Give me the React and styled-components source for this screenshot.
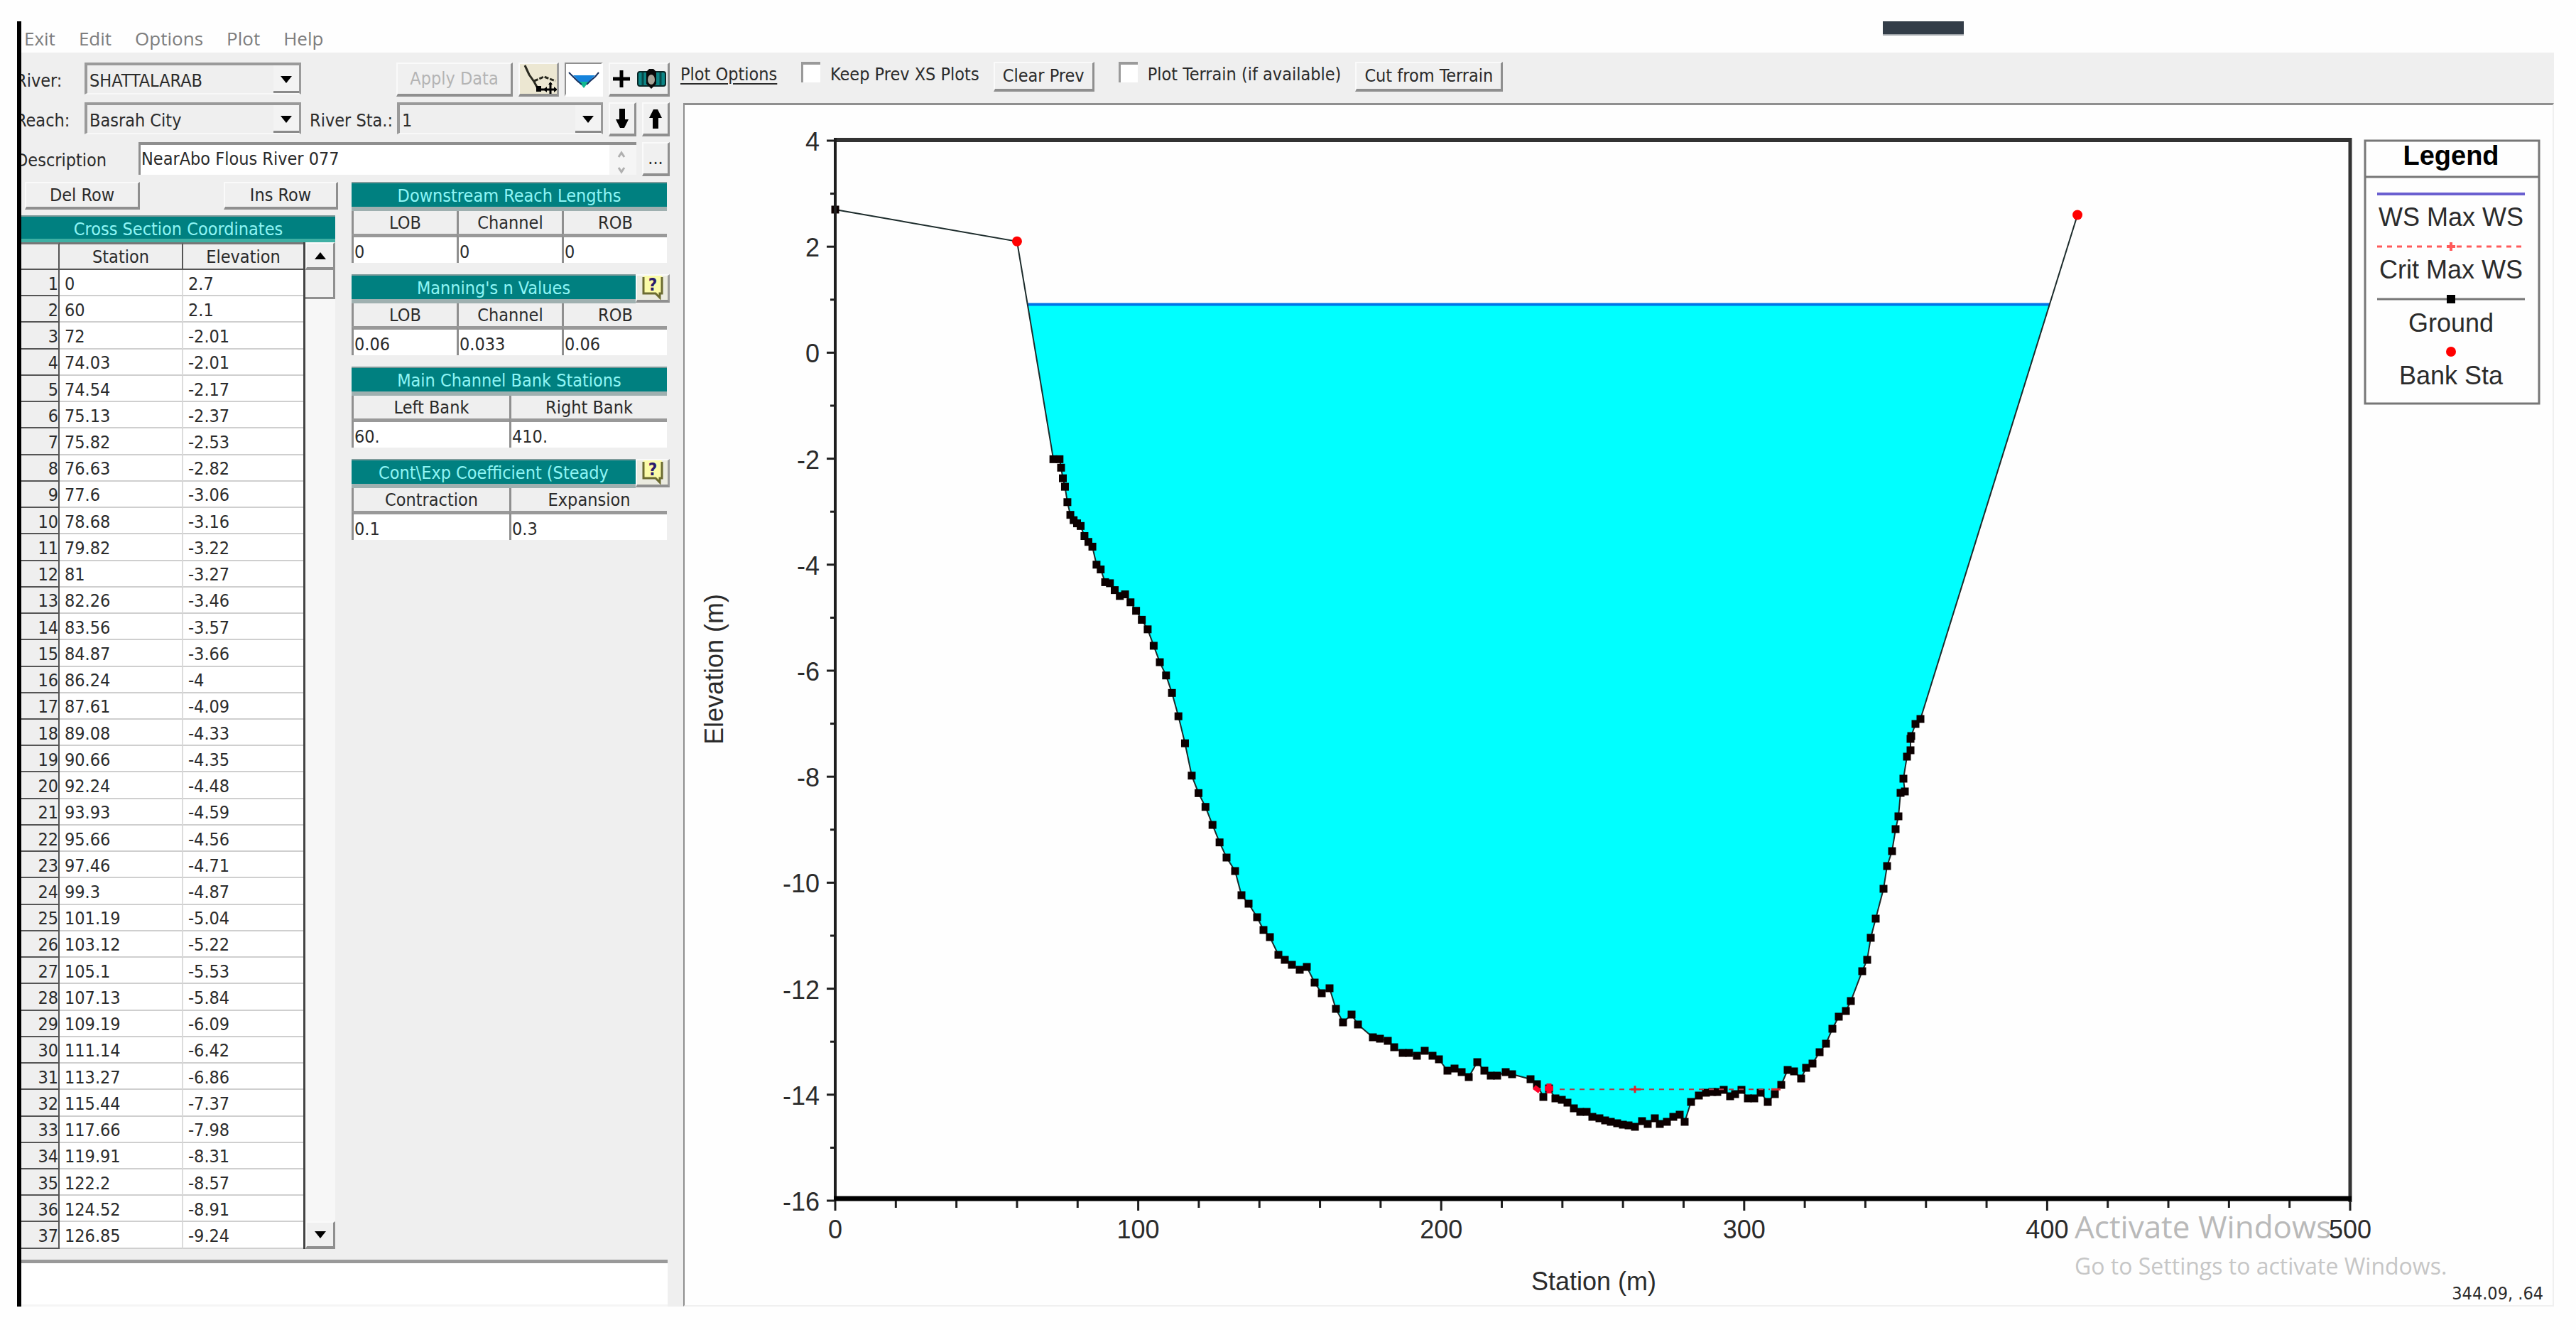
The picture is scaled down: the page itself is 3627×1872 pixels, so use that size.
import React, { useState } from 'react'
import styled, { createGlobalStyle } from 'styled-components'

const GlobalStyle = createGlobalStyle`
  *{
    box-sizing: border-box;
  }
  body{
    margin: 0;
    background: #fefefe;
    color: #2b2b2b;
    font: 25px/30px 'DejaVu Sans Condensed', 'DejaVu Sans', sans-serif;
  }
  button, input, select{
    font: inherit;
    color: inherit;
  }
`

const Page = styled.div`
  height: 100vh;
  min-height: 1300px;
  padding: 30px 31px 33px 24px;
`
const Window = styled.div`
  height: 100%;
  display: flex;
  flex-direction: column;
  border-left: 6px solid #000;
  background: #efefef;
  overflow: hidden;
`
const MenuBar = styled.nav`
  height: 44px;
  display: flex;
  align-items: center;
  gap: 33px;
  padding-left: 4px;
  background: #fefefe;
`
const MenuItem = styled.button`
  padding: 0;
  margin-top: 4px;
  border: 0;
  background: none;
  color: #7d7d7d;
  font: 26px/32px 'Open Sans', 'Noto Sans', sans-serif;
`
const DragHandle = styled.div`
  align-self: flex-start;
  width: 114px;
  height: 20px;
  margin-left: auto;
  margin-right: 831px;
  background: #333d48;
  border-bottom: 2px solid #9ea3a8;
`
const Main = styled.main`
  flex: 1;
  min-height: 0;
  display: grid;
  grid-template-columns: minmax(932px, 26%) 1fr;
  grid-template-rows: 100%;
`
const Side = styled.section`
  min-height: 0;
  display: flex;
  flex-direction: column;
  padding-top: 14px;
`
const Row = styled.div`
  display: flex;
  gap: 8px;
  height: 48px;
  margin: 0 19px 8px -8px;
`
const Label = styled.label`
  width: ${props => props.$width};
  flex: ${props => props.$width ? 'none' : '1'};
  padding-left: ${props => props.$width ? '0' : '4px'};
  margin-right: -8px;
  line-height: 52px;
  white-space: nowrap;
`
const SelectBox = styled.div`
  width: ${props => props.$width};
  height: 45px;
  display: grid;
  grid-template-columns: 1fr 36px;
  margin-right: ${props => props.$push ? 'auto' : '0'};
  border: solid #9a9a9a;
  border-width: 4px 3px 2px 4px;
  border-bottom-color: #f8f8f8;
  select{
    grid-area: 1 / 1 / 2 / 3;
    width: 100%;
    height: 100%;
    padding: 4px 42px 0 3px;
    border: 0;
    appearance: none;
    background: #efefef;
  }
  span{
    grid-area: 1 / 2 / 2 / 3;
    display: grid;
    place-items: center;
    padding-top: 4px;
    border-bottom: 3px solid #8a8a8a;
    background: #f3f3f3;
    pointer-events: none;
  }
`
const Button = styled.button`
  width: ${props => props.$width || 'auto'};
  height: ${props => props.$height || '48px'};
  display: flex;
  align-items: center;
  justify-content: center;
  gap: 4px;
  padding: 0;
  border: solid #fafafa;
  border-width: 2px 3px 4px 2px;
  border-right-color: #8f8f8f;
  border-bottom-color: #8f8f8f;
  background: ${props => props.$bg || '#f0f0f0'};
  white-space: nowrap;
  &:disabled{
    color: #b4b4b4;
  }
`
const IconButton = styled(Button)`
  border-color: ${props => props.$pressed ? '#8f8f8f #fff #fff #8f8f8f' : '#fafafa #9c9c9c #8f8f8f #fafafa'};
`
const Description = styled.div`
  flex: 1;
  height: 46px;
  display: flex;
  border: solid #8f8f8f;
  border-width: 4px 0 0 3px;
  background: #fff;
  input{
    flex: 1;
    padding: 0 0 2px 1px;
    border: 0;
    background: none;
  }
  svg{
    width: 38px;
    background: #f5f5f5;
  }
`
const Body = styled.div`
  flex: 1;
  min-height: 0;
  display: grid;
  grid-template-columns: 442px 448px;
  justify-content: space-between;
  margin-right: 19px;
`
const Coordinates = styled.div`
  min-height: 0;
  display: flex;
  flex-direction: column;
`
const RowButtons = styled.div`
  display: flex;
  justify-content: space-between;
  padding: 0 0 8px 5px;
  margin-right: -4px;
`
const Title = styled.h2`
  flex: 1;
  height: ${props => props.$tall ? '38px' : '41px'};
  margin: 0;
  padding-top: 4px;
  border-top: 2px solid #7d9a9a;
  border-bottom: ${props => props.$tall ? '5px solid #3fb0a4' : '6px solid #9fb0b0'};
  background: #008080;
  color: #8ff5f5;
  font-size: 25px;
  line-height: 28px;
  font-weight: normal;
  text-align: center;
  white-space: nowrap;
`
const GridBox = styled.div`
  flex: 1;
  min-height: 0;
  display: grid;
  grid-template-columns: 1fr 42px;
`
const CoordTable = styled.table`
  width: 100%;
  height: 100%;
  border-spacing: 0;
  table-layout: fixed;
  background: #fff;
  border-right: 3px solid #444;
  line-height: 28px;
  th, td{
    padding: 4px 0 0;
    text-align: left;
    font-weight: normal;
    border-right: 2px solid #dcdcdc;
    border-bottom: 2px solid #cfcfcf;
  }
  td{
    padding-left: 7px;
  }
  th{
    background: #efefef;
    border-color: #555;
  }
  thead th{
    height: 39px;
    padding-top: 2px;
    border-top: 3px solid #777;
    text-align: center;
  }
  tbody th{
    text-align: right;
  }
  th:last-child, td:last-child{
    border-right: 0;
  }
`
const IndexCol = styled.col`
  width: 54px;
`
const StationCol = styled.col`
  width: 174px;
`
const ScrollBar = styled.div`
  display: flex;
  flex-direction: column;
  background: #f7f7f7;
  button:last-child{
    margin-top: auto;
  }
`
const Thumb = styled.div`
  height: 41px;
  border: solid #8f8f8f;
  border-width: 0 3px 3px 0;
  background: #f0f0f0;
`
const Panels = styled.div`
  display: flex;
  flex-direction: column;
  gap: 16px;
`
const PanelHead = styled.div`
  display: flex;
  margin-right: ${props => props.$help ? '0' : '4px'};
`
const ValueTable = styled.table`
  width: 444px;
  border-spacing: 0;
  table-layout: fixed;
  th{
    height: 32px;
    padding: 2px 0 0;
    border-left: 3px solid #8f8f8f;
    font-weight: normal;
    line-height: 30px;
  }
  td{
    height: 41px;
    padding: 0;
    border-left: 3px solid #8f8f8f;
    border-top: 5px solid #999;
    background: #fff;
  }
  input{
    display: block;
    width: 100%;
    height: 36px;
    padding: 4px 0 0 1px;
    border: 0;
    background: none;
  }
`
const Messages = styled.output`
  height: 66px;
  margin: 15px 22px 0 0;
  border-top: 5px solid #999;
  border-bottom: 3px solid #f5f5f5;
  background: #fff;
`
const PlotArea = styled.section`
  min-width: 0;
  min-height: 0;
  display: flex;
  flex-direction: column;
`
const PlotBar = styled.div`
  display: flex;
  align-items: flex-start;
  height: 71px;
  padding-top: 13px;
  margin-left: -4px;
  span{
    width: 170px;
    line-height: 36px;
    text-decoration: underline;
    text-underline-offset: 4px;
  }
`
const Check = styled.label`
  display: flex;
  gap: 14px;
  margin-right: 20px;
  line-height: 36px;
  white-space: nowrap;
  button + &{
    margin-left: 34px;
  }
  input{
    appearance: none;
    width: 27px;
    height: 29px;
    margin: 0;
    border: solid #9a9a9a;
    border-width: 4px 0 0 3px;
    background: #fff;
  }
`
const Plot = styled.svg`
  flex: 1;
  min-height: 0;
  width: 100%;
  border: solid #8f8f8f;
  border-width: 3px 2px 2px 2px;
  border-right-color: #f0f0f0;
  border-bottom-color: #f0f0f0;
  background: #fefefe;
  font-family: 'Liberation Sans', Arial, sans-serif;
  font-size: 36px;
`

const coords = [
  [0, 2.7], [60, 2.1], [72, -2.01], [74.03, -2.01], [74.54, -2.17], [75.13, -2.37],
  [75.82, -2.53], [76.63, -2.82], [77.6, -3.06], [78.68, -3.16], [79.82, -3.22],
  [81, -3.27], [82.26, -3.46], [83.56, -3.57], [84.87, -3.66], [86.24, -4],
  [87.61, -4.09], [89.08, -4.33], [90.66, -4.35], [92.24, -4.48], [93.93, -4.59],
  [95.66, -4.56], [97.46, -4.71], [99.3, -4.87], [101.19, -5.04], [103.12, -5.22],
  [105.1, -5.53], [107.13, -5.84], [109.19, -6.09], [111.14, -6.42], [113.27, -6.86],
  [115.44, -7.37], [117.66, -7.98], [119.91, -8.31], [122.2, -8.57], [124.52, -8.91],
  [126.85, -9.24],
]

// rest of the bed, already in plot units
const bed = [
  [763, 1059], [775, 1078], [784, 1112], [794, 1124], [806, 1143], [815, 1161], [824, 1171],
  [836, 1196], [845, 1203], [855, 1210], [866, 1217], [876, 1213], [887, 1235], [897, 1250],
  [908, 1243], [917, 1272], [927, 1291], [939, 1280], [948, 1294], [969, 1312], [979, 1314],
  [990, 1317], [999, 1326], [1011, 1334], [1020, 1334], [1031, 1338], [1042, 1331],
  [1053, 1338], [1062, 1343], [1074, 1359], [1084, 1356], [1094, 1361], [1104, 1368],
  [1116, 1347], [1126, 1359], [1135, 1366], [1144, 1366], [1156, 1361], [1165, 1364],
  [1191, 1371], [1200, 1378], [1209, 1396], [1217, 1384], [1226, 1398], [1235, 1400],
  [1243, 1404], [1252, 1412], [1261, 1417], [1270, 1417], [1278, 1424], [1288, 1426],
  [1296, 1429], [1304, 1431], [1313, 1433], [1321, 1435], [1329, 1436], [1338, 1438],
  [1348, 1430], [1356, 1434], [1366, 1426], [1373, 1434], [1383, 1431], [1392, 1424],
  [1401, 1421], [1408, 1431], [1417, 1403], [1428, 1394], [1438, 1390], [1447, 1389],
  [1454, 1389], [1463, 1386], [1472, 1395], [1479, 1392], [1488, 1386], [1497, 1398],
  [1506, 1398], [1515, 1390], [1525, 1403], [1535, 1392], [1544, 1379], [1553, 1358],
  [1562, 1360], [1572, 1370], [1579, 1355], [1588, 1349], [1598, 1333], [1607, 1321],
  [1616, 1300], [1625, 1283], [1635, 1275], [1642, 1261], [1658, 1219], [1665, 1203],
  [1670, 1172], [1677, 1145], [1688, 1103], [1693, 1071], [1700, 1050], [1705, 1019],
  [1709, 1001], [1712, 968], [1718, 966], [1716, 948], [1721, 917], [1726, 908],
  [1726, 892], [1727, 888], [1733, 871], [1740, 864],
]

const X = station => 212 + station * 4.266
const Y = elevation => 50 + (4 - elevation) * 74.6

function Arrow({ up }){
  return <svg width="16" height="10"><path d={up ? 'M0 10L8 0L16 10Z' : 'M0 0H16L8 10Z'} fill="#000"/></svg>
}

function Combo({ id, value, width, push }){
  return(
    <SelectBox $width={width} $push={push}>
      <select id={id} defaultValue={value}>
        <option>{value}</option>
      </select>
      <span><Arrow/></span>
    </SelectBox>
  )
}

function ValuePanel({ title, heads, values, help }){
  return(
    <div>
      <PanelHead $help={help}>
        <Title>{title}</Title>
        {help && (
          <IconButton $width="48px" $height="40px" $bg="#ebebe0" aria-label="Help">
            <svg width="36" height="34" viewBox="0 0 36 34">
              <path d="M5 0V25H22L28 31V25H31V0Z" fill="#fbfba8"/>
              <path d="M5 2V25H22L28 31V25H31V2" fill="none" stroke="#6b6b30" strokeWidth="3"/>
              <text x="18" y="21" textAnchor="middle" fontSize="24" fontWeight="bold" fill="#2c1c6c">?</text>
            </svg>
          </IconButton>
        )}
      </PanelHead>
      <ValueTable>
        <thead>
          <tr>{heads.map(head => <th key={head}>{head}</th>)}</tr>
        </thead>
        <tbody>
          <tr>
            {values.map((value, i) => (
              <td key={heads[i]}><input aria-label={heads[i]} defaultValue={value}/></td>
            ))}
          </tr>
        </tbody>
      </ValueTable>
    </div>
  )
}

function CrossSectionPlot(){
  const tablePoints = coords.map(([s, e]) => [X(s), Y(e)])
  const ground = [...tablePoints, ...bed, [X(410), Y(2.6)]]
  const ws = Y(0.91)
  const water = [[X(63.6), ws], ...tablePoints.slice(2), ...bed, [X(400.8), ws]]
  const crit = Y(-13.9)
  const xTicks = Array.from({ length: 26 }, (_, i) => i * 20)
  const yTicks = Array.from({ length: 21 }, (_, i) => 4 - i)

  return(
    <Plot viewBox="0 0 2630 1689" preserveAspectRatio="none" fill="#2b2b2b">
      <polygon points={water.join(' ')} fill="#00ffff"/>
      <line x1={X(63.6)} x2={X(400.8)} y1={ws} y2={ws} stroke="#0074e8" strokeWidth="4"/>
      <polyline points={ground.join(' ')} fill="none" stroke="#1c2b2b" strokeWidth="2"/>
      {[tablePoints[0], ...tablePoints.slice(2), ...bed].map(([x, y], i) => (
        <rect key={i} x={x - 5.5} y={y - 5.5} width="11" height="11" fill="#0c0000"/>
      ))}
      <line x1="1232" x2="1528" y1={crit} y2={crit} stroke="#b03a48" strokeWidth="2" strokeDasharray="7 7"/>
      <path d={`M1332 ${crit}H1346M1338 ${crit - 5}V${crit + 5}M1530 ${crit}H1543`} stroke="#e0242c" strokeWidth="3"/>
      <path d="M1196 1382L1204 1388M1217 1377V1391M1211 1384H1223" stroke="#ff0028" strokeWidth="7"/>
      <circle cx={X(60)} cy={Y(2.1)} r="7" fill="#ff0000"/>
      <circle cx={X(410)} cy={Y(2.6)} r="7" fill="#ff0000"/>

      <g stroke="#1e1e1e" fill="none">
        <path d="M211 49H2345" strokeWidth="6" stroke="#333"/>
        <path d="M2345 46V1544" strokeWidth="5" stroke="#333"/>
        <path d="M212 46V1542" strokeWidth="4"/>
        <path d="M210 1539H2347" strokeWidth="7" stroke="#000"/>
        {xTicks.map(s => <path key={s} d={`M${X(s)} 1542v${s % 100 ? 10 : 14}`} strokeWidth="3"/>)}
        {yTicks.map(e => <path key={e} d={`M211 ${Y(e)}h${e % 2 ? -6 : -11}`} strokeWidth="3"/>)}
      </g>

      <g fill="#b9b9b9" fontFamily="'Open Sans', 'Noto Sans', sans-serif">
        <text x="1957" y="1595" fontSize="44">Activate Windows</text>
        <text x="1957" y="1646" fontSize="32" fill="#c6c6c6">Go to Settings to activate Windows.</text>
      </g>
      {xTicks.filter(s => s % 100 === 0).map(s => (
        <text key={s} x={X(s)} y="1595" textAnchor="middle">{s}</text>
      ))}
      {yTicks.filter(e => e % 2 === 0).map(e => (
        <text key={e} x="190" y={Y(e) + 14} textAnchor="end">{e}</text>
      ))}
      <text x="1280" y="1668" textAnchor="middle">Station (m)</text>
      <text transform="translate(54 794) rotate(-90)" textAnchor="middle">Elevation (m)</text>
      <text x="2617" y="1681" textAnchor="end" fontSize="25" fontFamily="'DejaVu Sans Condensed', sans-serif">344.09, .64</text>

      <g textAnchor="middle">
        <rect x="2366" y="50" width="245" height="370" fill="#fefefe" stroke="#777" strokeWidth="3"/>
        <path d="M2366 101H2611M2383 273H2591" stroke="#777" strokeWidth="3"/>
        <text x="2487" y="84" fontSize="38" fontWeight="bold" fill="#000">Legend</text>
        <path d="M2383 125H2591" stroke="#6a5fd0" strokeWidth="4"/>
        <text x="2487" y="170">WS Max WS</text>
        <path d="M2383 199H2591" stroke="#ff5a5a" strokeWidth="3" strokeDasharray="7 7"/>
        <path d="M2487 193V205M2481 199H2493" stroke="#ff5a5a" strokeWidth="4"/>
        <text x="2487" y="244">Crit Max WS</text>
        <rect x="2481" y="267" width="12" height="12" fill="#000"/>
        <text x="2487" y="319">Ground</text>
        <circle cx="2487" cy="347" r="7" fill="#ff0000"/>
        <text x="2487" y="393">Bank Sta</text>
      </g>
    </Plot>
  )
}

export default function App(){
  const [description, setDescription] = useState('NearAbo Flous River 077')

  return(
    <Page>
      <GlobalStyle/>
      <Window>
        <MenuBar>
          {['Exit', 'Edit', 'Options', 'Plot', 'Help'].map(item => <MenuItem key={item}>{item}</MenuItem>)}
          <DragHandle/>
        </MenuBar>
        <Main>
          <Side>
            <Row>
              <Label htmlFor="river" $width="97px">River:</Label>
              <Combo id="river" value="SHATTALARAB" width="305px" push/>
              <Button $width="164px" disabled>Apply Data</Button>
              <IconButton $width="57px" $bg="#ece7d2" aria-label="Edit points">
                <svg width="52" height="42" viewBox="0 0 52 42" fill="none" stroke="#2a2a20" strokeWidth="3">
                  <path d="M7 2L13 15L20 25L26 36"/>
                  <path d="M20 24L34 18L50 24" strokeDasharray="6 2"/>
                  <path d="M26 36H50M43 27V42" stroke="#000"/>
                  <path d="M23 31h7v8h-7zM40 29l3-4l3 4zM48 32l5 4l-5 4zM38 32l-5 4l5 4z" fill="#000" stroke="none"/>
                </svg>
              </IconButton>
              <IconButton $width="54px" $bg="#fff" $pressed aria-label="Show water">
                <svg width="46" height="36" viewBox="0 0 46 36">
                  <path d="M8 13H39L30 22H16Z" fill="#1583dc"/>
                  <path d="M16 22H30L23 31Z" fill="#10b890"/>
                  <path d="M2 9L8 15L14 21L20 26M44 9L39 15L32 21L27 26" fill="none" stroke="#153060" strokeWidth="2"/>
                </svg>
              </IconButton>
              <Button $width="86px" aria-label="Add picture">
                <svg width="76" height="30" viewBox="0 0 76 30">
                  <path d="M13 3V27M1 15H25" stroke="#000" strokeWidth="5"/>
                  <rect x="36" y="5" width="39" height="20" rx="3" fill="#0c8585" stroke="#0a2626" strokeWidth="2"/>
                  <path d="M43 6V24M68 6V24" stroke="#064848" strokeWidth="3"/>
                  <path d="M48 5L52 1H58L62 5V22L55 29L48 22Z" fill="#0a0a0a"/>
                  <ellipse cx="55" cy="16" rx="5" ry="7" fill="#a8a498"/>
                </svg>
              </Button>
            </Row>
            <Row>
              <Label htmlFor="reach" $width="97px">Reach:</Label>
              <Combo id="reach" value="Basrah City" width="305px"/>
              <Label htmlFor="station">River Sta.:</Label>
              <Combo id="station" value="1" width="290px"/>
              <Button $width="39px" aria-label="Next station">
                <svg width="20" height="28" viewBox="0 0 20 28"><path d="M6 0H14V15H19L13 27H7L1 15H6Z" fill="#000"/></svg>
              </Button>
              <Button $width="39px" aria-label="Previous station">
                <svg width="20" height="28" viewBox="0 0 20 28"><path d="M6 28H14V13H19L13 1H7L1 13H6Z" fill="#000"/></svg>
              </Button>
            </Row>
            <Row>
              <Label htmlFor="description" $width="173px">Description</Label>
              <Description>
                <input id="description" value={description} onChange={e => setDescription(e.target.value)}/>
                <svg viewBox="0 0 38 42" fill="none" stroke="#b0b0b0" strokeWidth="3">
                  <path d="M13 17L17 11L21 17M13 32L17 38L21 32"/>
                </svg>
              </Description>
              <Button $width="39px">...</Button>
            </Row>

            <Body>
              <Coordinates>
                <RowButtons>
                  <Button $width="162px" $height="39px">Del Row</Button>
                  <Button $width="161px" $height="39px">Ins Row</Button>
                </RowButtons>
                <div><Title $tall>Cross Section Coordinates</Title></div>
                <GridBox>
                  <CoordTable>
                    <colgroup>
                      <IndexCol/>
                      <StationCol/>
                      <col/>
                    </colgroup>
                    <thead>
                      <tr><th></th><th>Station</th><th>Elevation</th></tr>
                    </thead>
                    <tbody>
                      {coords.map(([station, elevation], i) => (
                        <tr key={station}>
                          <th>{i + 1}</th>
                          <td>{station}</td>
                          <td>{elevation}</td>
                        </tr>
                      ))}
                    </tbody>
                  </CoordTable>
                  <ScrollBar>
                    <Button $height="39px" aria-label="Scroll up"><Arrow up/></Button>
                    <Thumb/>
                    <Button $height="39px" aria-label="Scroll down"><Arrow/></Button>
                  </ScrollBar>
                </GridBox>
              </Coordinates>
              <Panels>
                <ValuePanel title="Downstream Reach Lengths" heads={['LOB', 'Channel', 'ROB']} values={['0', '0', '0']}/>
                <ValuePanel title="Manning's n Values" heads={['LOB', 'Channel', 'ROB']} values={['0.06', '0.033', '0.06']} help/>
                <ValuePanel title="Main Channel Bank Stations" heads={['Left Bank', 'Right Bank']} values={['60.', '410.']}/>
                <ValuePanel title="Cont\Exp Coefficient (Steady" heads={['Contraction', 'Expansion']} values={['0.1', '0.3']} help/>
              </Panels>
            </Body>
            <Messages/>
          </Side>

          <PlotArea>
            <PlotBar>
              <span>Plot Options</span>
              <Check><input type="checkbox"/>Keep Prev XS Plots</Check>
              <Button $width="142px" $height="42px">Clear Prev</Button>
              <Check><input type="checkbox"/>Plot Terrain (if available)</Check>
              <Button $width="208px" $height="42px">Cut from Terrain</Button>
            </PlotBar>
            <CrossSectionPlot/>
          </PlotArea>
        </Main>
      </Window>
    </Page>
  )
}
